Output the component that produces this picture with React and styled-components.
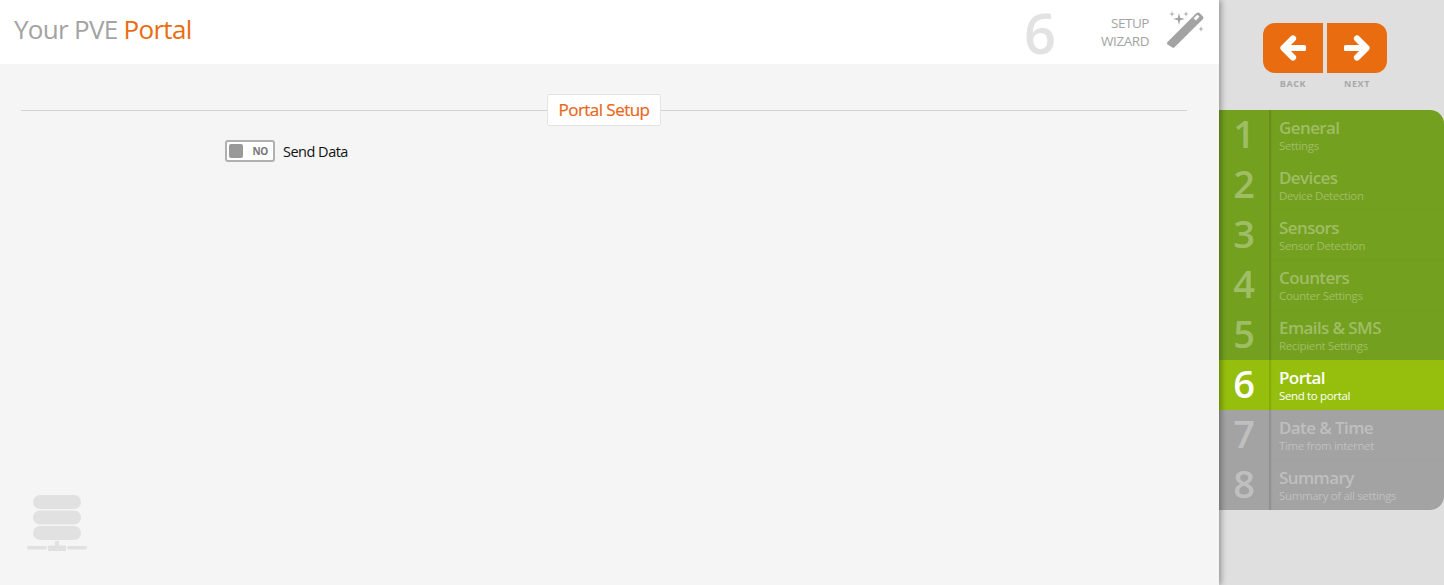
import React from "react";
import styled, { createGlobalStyle } from "styled-components";

const Global = createGlobalStyle`
  html, body { margin: 0; padding: 0; height: 100%; overflow: hidden; }
  body { font-family: "Open Sans", "Liberation Sans", sans-serif; background: #dfdfdf; }
  #root { height: 585px; }
`;
const Page = styled.div`display: flex; width: 1444px; height: 585px; background: #dfdfdf;`;
const Main = styled.main`
  width: 1219px; height: 585px; display: flex; flex-direction: column; background: #f5f5f5;
  box-shadow: 2px 0 6px rgba(0,0,0,.35); position: relative; z-index: 2;
`;
const Header = styled.header`
  height: 64px; background: #fff; display: flex; align-items: center; padding: 0 15px 0 14px;
`;
const Title = styled.h1`
  margin: 0 0 6px; font-size: 26px; font-weight: 400; letter-spacing: -0.7px; color: #a3a3a3; flex: 1; line-height: 36px;
  span { color: #ea6c10; }
`;
const StepNumber = styled.div`
  font-size: 56px; font-weight: 600; color: #e2e2e2; line-height: 60px; margin: 0 45px 0 0;
`;
const WizardLabel = styled.div`
  font-size: 13.5px; line-height: 18px; color: #a3a3a3; text-align: right; letter-spacing: -0.45px; margin: 0 17px 0 0;
`;
const WandBox = styled.div`width: 38px; height: 38px; margin-bottom: 6px;`;
const Content = styled.div`flex: 1; display: flex; flex-direction: column; padding: 30px 32px 28px 21px;`;
const SectionHead = styled.div`
  display: flex; align-items: center;
  &::before, &::after { content: ""; flex: 1; height: 1px; background: #d2d2d2; }
`;
const SectionTitle = styled.h2`
  margin: 0; height: 30px; width: 112px; box-sizing: content-box; border: 1px solid #e3e3e3; border-radius: 2px; background: #fff;
  font-size: 17px; font-weight: 400; letter-spacing: -0.55px; line-height: 30px; text-align: center; color: #e8661a;
  -webkit-text-stroke: 0.2px #e8661a;
`;
const FieldRow = styled.div`display: flex; align-items: center; margin: 14px 0 0 204px;`;
const Toggle = styled.div`
  height: 18px; width: 39px; border: 2px solid #b0b0b0; border-radius: 3px; background: #fff;
  display: flex; align-items: center; justify-content: space-between; padding: 0 5px 0 2px; box-sizing: content-box;
`;
const Knob = styled.span`width: 14px; height: 14px; background: #999; border-radius: 2px;`;
const ToggleText = styled.span`font-size: 10px; font-weight: 700; color: #777; letter-spacing: -0.3px;`;
const FieldLabel = styled.label`font-size: 14.5px; color: #111; margin-left: 8px; letter-spacing: -0.5px;`;
const ServerWrap = styled.div`margin: auto 0 0 5px; height: 62px;`;
const Side = styled.aside`width: 225px; display: flex; flex-direction: column; align-items: flex-start;`;
const NavButtons = styled.div`display: flex; gap: 4px; margin: 23px 0 0 44px;`;
const NavCol = styled.div`display: flex; flex-direction: column; align-items: center;`;
const NavBtn = styled.button`
  width: 60px; height: 50px; border: 0; padding: 0; background: #ea6c10; display: flex; align-items: center; justify-content: center;
  border-radius: ${p => (p.$side === "left" ? "12px 0 0 12px" : "0 12px 12px 0")};
`;
const NavLabel = styled.span`font-size: 9px; font-weight: 700; letter-spacing: .6px; color: #a8a8a8; margin-top: 5px; line-height: 12px;`;
const Steps = styled.ol`
  list-style: none; margin: 20px 0 0; padding: 0; width: 225px;
`;
const bg = { done: "#74a01f", active: "#95bf0c", todo: "#a3a3a3" };
const Step = styled.li`
  height: 50px; display: flex; background: ${p => bg[p.$state]}; color: ${p => (p.$state === "active" ? "#fff" : "rgba(255,255,255,.33)")};
  &:first-child { border-top-right-radius: 14px; }
  &:last-child { border-bottom-right-radius: 14px; }
`;
const Num = styled.div`
  width: 50px; height: 50px; font-size: 38px; font-weight: 600; line-height: 46px; text-align: center; flex: none;
`;
const StepText = styled.div`
  flex: 1; padding: 8px 0 0 10px; box-shadow: inset 3px 0 2px -1px rgba(0,0,0,.12); border-radius: inherit;
`;
const StepName = styled.div`font-size: 17px; font-weight: 600; line-height: 20px; letter-spacing: -0.6px;`;
const StepSub = styled.div`font-size: 11.5px; line-height: 16px; letter-spacing: -0.35px;`;

const steps = [
  ["General", "Settings", "done"], ["Devices", "Device Detection", "done"], ["Sensors", "Sensor Detection", "done"],
  ["Counters", "Counter Settings", "done"], ["Emails & SMS", "Recipient Settings", "done"], ["Portal", "Send to portal", "active"],
  ["Date & Time", "Time from internet", "todo"], ["Summary", "Summary of all settings", "todo"],
];

const Spark = ({ x, y, r }) => {
  const k = r * 0.2;
  return <path d={`M${x} ${y - r} L${x + k} ${y - k} L${x + r} ${y} L${x + k} ${y + k} L${x} ${y + r} L${x - k} ${y + k} L${x - r} ${y} L${x - k} ${y - k}Z`} />;
};
const Wand = () => (
  <svg width="38" height="38" viewBox="0 0 38 38" fill="#a3a3a3">
    <path d="M1.5 32 L30.5 3 Q32 1.8 33.5 3 L36.8 6.2 Q38 7.8 36.8 9.2 L8.5 37.2 Q7.2 38.2 6 37.2 L1.5 34.5 Q.6 33 1.5 32Z" />
    <path d="M27.5 8.2 L31.5 4.8 L33.5 6.8 L29.8 10.5Z" fill="#fff" />
    <Spark x={13} y={9} r={6} />
    <Spark x={6} y={4} r={3} />
    <Spark x={20} y={4} r={3} />
    <Spark x={35} y={19} r={3} />
  </svg>
);
const Arrow = ({ flip }) => (
  <svg width="26" height="26" viewBox="0 0 26 26" style={flip ? { transform: "scaleX(-1)" } : undefined}>
    <path d="M2.5 13 H22 M13 3.5 L22.5 13 L13 22.5" fill="none" stroke="#fff" strokeWidth="6.2" strokeLinecap="round" strokeLinejoin="round" />
  </svg>
);
const Server = () => (
  <svg width="62" height="62" viewBox="0 0 62 62" fill="#e1e1e1">
    <rect x="7" y="0" width="48" height="14" rx="7" />
    <rect x="7" y="15.5" width="48" height="14" rx="7" />
    <rect x="7" y="31" width="48" height="14" rx="7" />
    <rect x="1" y="51" width="20" height="3.5" rx="1.7" />
    <rect x="41" y="51" width="20" height="3.5" rx="1.7" />
    <rect x="22" y="50.5" width="18" height="5.5" rx="1" />
    <rect x="29" y="46" width="4" height="5" />
  </svg>
);

export default function App() {
  return (
    <Page>
      <Global />
      <Main>
        <Header>
          <Title>Your PVE <span>Portal</span></Title>
          <StepNumber>6</StepNumber>
          <WizardLabel>SETUP<br />WIZARD</WizardLabel>
          <WandBox><Wand /></WandBox>
        </Header>
        <Content>
          <SectionHead><SectionTitle>Portal Setup</SectionTitle></SectionHead>
          <FieldRow>
            <Toggle><Knob /><ToggleText>NO</ToggleText></Toggle>
            <FieldLabel>Send Data</FieldLabel>
          </FieldRow>
          <ServerWrap><Server /></ServerWrap>
        </Content>
      </Main>
      <Side>
        <NavButtons>
          <NavCol><NavBtn $side="left" aria-label="Back"><Arrow flip /></NavBtn><NavLabel>BACK</NavLabel></NavCol>
          <NavCol><NavBtn $side="right" aria-label="Next"><Arrow /></NavBtn><NavLabel>NEXT</NavLabel></NavCol>
        </NavButtons>
        <Steps>
          {steps.map(([n, s, st], i) => (
            <Step key={n} $state={st}>
              <Num>{i + 1}</Num>
              <StepText><StepName>{n}</StepName><StepSub>{s}</StepSub></StepText>
            </Step>
          ))}
        </Steps>
      </Side>
    </Page>
  );
}
